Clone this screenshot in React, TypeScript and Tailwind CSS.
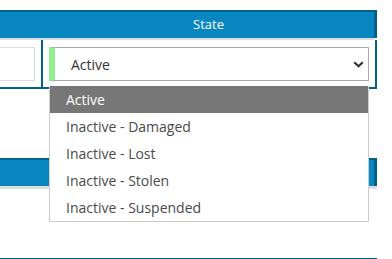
import React from 'react';

const options = ['Active', 'Inactive - Damaged', 'Inactive - Lost', 'Inactive - Stolen', 'Inactive - Suspended'];

export default function App() {
  return (
    <div className="relative w-[392px] h-[259px] overflow-hidden bg-white pt-[10px]" style={{ fontFamily: '"Open Sans", sans-serif' }}>
      {/* upper table */}
      <div className="w-[377px]">
        <div className="flex h-[28px] border-t-2 border-r-[3px] border-[#00618c] bg-[#0786bf] text-[13px] text-white">
          <div className="w-[43px]" />
          <div className="flex flex-1 items-center justify-center">State</div>
        </div>
        <div className="h-[2px] w-[375px] bg-[#dedede]" />
        <div className="flex">
          <div className="w-[43px] border-r-2 border-b-2 border-[#00618c] pt-[7px] pb-[6px] pr-[6px]">
            <div className="h-[34px] border border-l-0 border-[#dddddd] bg-white" />
          </div>
          <div className="flex-1 border-r-2 border-b-2 border-[#00618c] px-[6px] pt-[7px] pb-[6px]">
            <div className="relative flex h-[34px] items-center border border-l-[6px] border-[#a9a9a9] border-l-[#90ee90] bg-white pl-[16px] text-[14px] text-[#333]">
              Active
              <svg className="absolute right-[4px] top-[13px]" width="11" height="7" viewBox="0 0 11 7">
                <path d="M1.2 1.2 L5.5 5.3 L9.8 1.2" fill="none" stroke="#333" strokeWidth="2.2" />
              </svg>
            </div>
          </div>
        </div>
      </div>

      {/* lower table */}
      <div className="mt-[69px] w-[377px]">
        <div className="h-[28px] border-t-2 border-r-[3px] border-[#00618c] bg-[#0786bf]" />
        <div className="h-[3px] w-[377px] bg-[#dedede]" />
        <div className="h-[69px]" />
        <div className="h-[2px] bg-[#00618c]" />
      </div>

      {/* open select list */}
      <div className="absolute left-[49px] top-[86px] w-[320px] border border-t-0 border-[#cccccc] bg-white text-[14px] text-[#4a4a4a]">
        {options.map((o, i) => (
          <div key={o} className={`flex h-[27px] items-center pl-[16px] ${i === 0 ? 'bg-[#777777] text-white' : ''}`}>
            {o}
          </div>
        ))}
      </div>
    </div>
  );
}
